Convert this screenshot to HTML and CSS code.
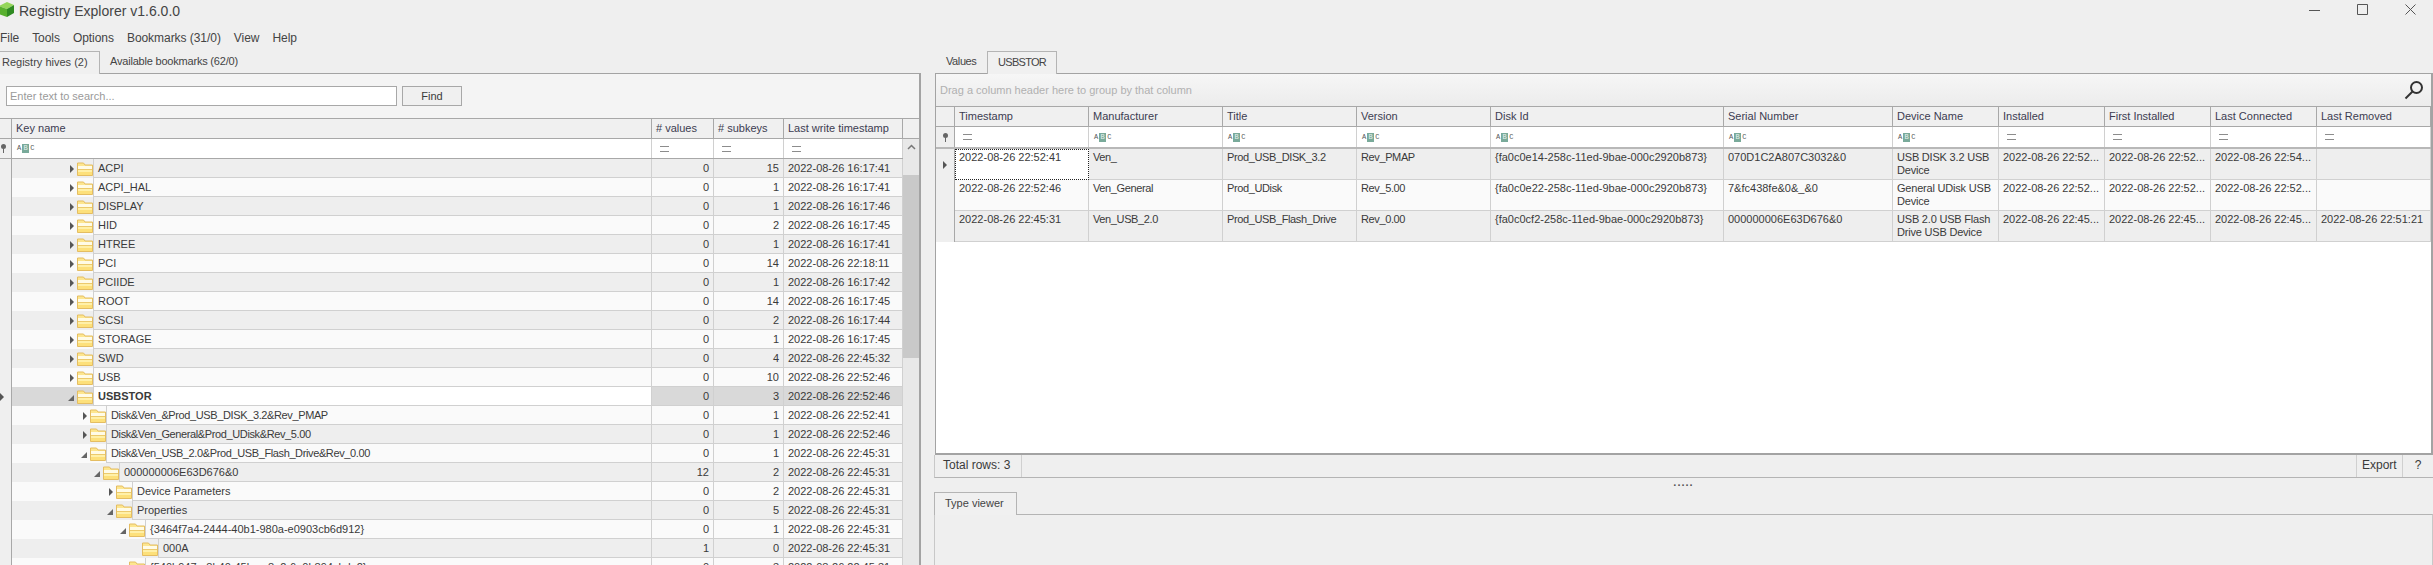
FILE: index.html
```html
<!DOCTYPE html>
<html lang="en">

<head>
    <meta charset="UTF-8">
    <title>Registry Explorer v1.6.0.0</title>
    <link rel="stylesheet" href="styles.css">
</head>

<body>
    <svg class="defs" aria-hidden="true">
        <symbol id="folder" viewBox="0 0 16 14">
            <path d="M.5 13.500V1h6l1.500 2h7.500v10.500z" fill="#fde68f" stroke="#e4bd62" />
            <rect x="1" y="4" width="14" height="3" fill="#fffbe6" />
            <rect x="1" y="7" width="14" height="1" fill="#ecca6c" />
            <rect x="1" y="8" width="14" height="2" fill="#fff0a8" />
            <rect x="1" y="10" width="14" height="3" fill="#fde07a" />
        </symbol>
        <symbol id="pin" viewBox="0 0 7 9">
            <circle cx="3.500" cy="2.500" r="2.500" fill="#666" />
            <rect x="3" y="4" width="1" height="5" fill="#666" />
        </symbol>
    </svg>

    <div class="app">
        <div class="titlebar">
            <svg class="logo" viewBox="0 0 15 15">
                <path d="M-1 4 7 0l7 3-7 4z" fill="#94d65a" />
                <path d="M-1 4l8 3v8l-8-3z" fill="#58b02e" />
                <path d="M7 7l7-4v8l-7 4z" fill="#2f8a22" />
            </svg>
            <span class="app-name">Registry Explorer v1.6.0.0</span>
            <div class="win-buttons">
                <svg viewBox="0 0 11 11"><path d="M0 6.500h11" /></svg>
                <svg viewBox="0 0 11 11"><path d="M.5.5h10v10H.5z" /></svg>
                <svg viewBox="0 0 11 11"><path d="M.5.5l10 10M10.500.5l-10 10" /></svg>
            </div>
        </div>

        <div class="menubar">
            <span>File</span>
            <span>Tools</span>
            <span>Options</span>
            <span>Bookmarks (31/0)</span>
            <span>View</span>
            <span>Help</span>
        </div>

        <div class="workspace">
            <div class="left">
                <div class="tabs">
                    <span class="tab active hives">Registry hives (2)</span>
                    <span class="tab bookmarks">Available bookmarks (62/0)</span>
                </div>
                <div class="hive-panel">
                    <div class="search">
                        <div class="search-input">Enter text to search...</div>
                        <div class="find">Find</div>
                    </div>

                    <div class="tree-row tree-head">
                        <div class="head-cell"></div>
                        <div class="head-cell">Key name</div>
                        <div class="head-cell"># values</div>
                        <div class="head-cell"># subkeys</div>
                        <div class="head-cell">Last write timestamp</div>
                        <div class="head-cell corner"></div>
                    </div>

                    <div class="tree-main">
                        <div class="tree-rows">
                            <div class="tree-row tree-filter">
                                <div class="ind"><svg class="pin"><use href="#pin" /></svg></div>
                                <div class="filter-cell"><span class="abc">A<b>B</b>C</span></div>
                                <div class="filter-cell"><i class="eq"></i></div>
                                <div class="filter-cell"><i class="eq"></i></div>
                                <div class="filter-cell"><i class="eq"></i></div>
                            </div>

                            <div class="tree-row even">
                                <div class="ind"></div>
                                <div class="key"><span class="indent"><i class="exp"></i><svg class="folder"><use href="#folder" /></svg></span><span class="name">ACPI</span></div>
                                <div class="num">0</div><div class="num">15</div><div class="stamp">2022-08-26 16:17:41</div>
                            </div>
                            <div class="tree-row odd">
                                <div class="ind"></div>
                                <div class="key"><span class="indent"><i class="exp"></i><svg class="folder"><use href="#folder" /></svg></span><span class="name">ACPI_HAL</span></div>
                                <div class="num">0</div><div class="num">1</div><div class="stamp">2022-08-26 16:17:41</div>
                            </div>
                            <div class="tree-row even">
                                <div class="ind"></div>
                                <div class="key"><span class="indent"><i class="exp"></i><svg class="folder"><use href="#folder" /></svg></span><span class="name">DISPLAY</span></div>
                                <div class="num">0</div><div class="num">1</div><div class="stamp">2022-08-26 16:17:46</div>
                            </div>
                            <div class="tree-row odd">
                                <div class="ind"></div>
                                <div class="key"><span class="indent"><i class="exp"></i><svg class="folder"><use href="#folder" /></svg></span><span class="name">HID</span></div>
                                <div class="num">0</div><div class="num">2</div><div class="stamp">2022-08-26 16:17:45</div>
                            </div>
                            <div class="tree-row even">
                                <div class="ind"></div>
                                <div class="key"><span class="indent"><i class="exp"></i><svg class="folder"><use href="#folder" /></svg></span><span class="name">HTREE</span></div>
                                <div class="num">0</div><div class="num">1</div><div class="stamp">2022-08-26 16:17:41</div>
                            </div>
                            <div class="tree-row odd">
                                <div class="ind"></div>
                                <div class="key"><span class="indent"><i class="exp"></i><svg class="folder"><use href="#folder" /></svg></span><span class="name">PCI</span></div>
                                <div class="num">0</div><div class="num">14</div><div class="stamp">2022-08-26 22:18:11</div>
                            </div>
                            <div class="tree-row even">
                                <div class="ind"></div>
                                <div class="key"><span class="indent"><i class="exp"></i><svg class="folder"><use href="#folder" /></svg></span><span class="name">PCIIDE</span></div>
                                <div class="num">0</div><div class="num">1</div><div class="stamp">2022-08-26 16:17:42</div>
                            </div>
                            <div class="tree-row odd">
                                <div class="ind"></div>
                                <div class="key"><span class="indent"><i class="exp"></i><svg class="folder"><use href="#folder" /></svg></span><span class="name">ROOT</span></div>
                                <div class="num">0</div><div class="num">14</div><div class="stamp">2022-08-26 16:17:45</div>
                            </div>
                            <div class="tree-row even">
                                <div class="ind"></div>
                                <div class="key"><span class="indent"><i class="exp"></i><svg class="folder"><use href="#folder" /></svg></span><span class="name">SCSI</span></div>
                                <div class="num">0</div><div class="num">2</div><div class="stamp">2022-08-26 16:17:44</div>
                            </div>
                            <div class="tree-row odd">
                                <div class="ind"></div>
                                <div class="key"><span class="indent"><i class="exp"></i><svg class="folder"><use href="#folder" /></svg></span><span class="name">STORAGE</span></div>
                                <div class="num">0</div><div class="num">1</div><div class="stamp">2022-08-26 16:17:45</div>
                            </div>
                            <div class="tree-row even">
                                <div class="ind"></div>
                                <div class="key"><span class="indent"><i class="exp"></i><svg class="folder"><use href="#folder" /></svg></span><span class="name">SWD</span></div>
                                <div class="num">0</div><div class="num">4</div><div class="stamp">2022-08-26 22:45:32</div>
                            </div>
                            <div class="tree-row odd">
                                <div class="ind"></div>
                                <div class="key"><span class="indent"><i class="exp"></i><svg class="folder"><use href="#folder" /></svg></span><span class="name">USB</span></div>
                                <div class="num">0</div><div class="num">10</div><div class="stamp">2022-08-26 22:52:46</div>
                            </div>
                            <div class="tree-row selected">
                                <div class="ind"><i class="exp"></i></div>
                                <div class="key"><span class="indent"><i class="exp open"></i><svg class="folder"><use href="#folder" /></svg></span><span class="name">USBSTOR</span></div>
                                <div class="num">0</div><div class="num">3</div><div class="stamp">2022-08-26 22:52:46</div>
                            </div>
                            <div class="tree-row odd">
                                <div class="ind"></div>
                                <div class="key"><span class="indent lv1"><i class="exp"></i><svg class="folder"><use href="#folder" /></svg></span><span class="name tight">Disk&amp;Ven_&amp;Prod_USB_DISK_3.2&amp;Rev_PMAP</span></div>
                                <div class="num">0</div><div class="num">1</div><div class="stamp">2022-08-26 22:52:41</div>
                            </div>
                            <div class="tree-row even">
                                <div class="ind"></div>
                                <div class="key"><span class="indent lv1"><i class="exp"></i><svg class="folder"><use href="#folder" /></svg></span><span class="name tight">Disk&amp;Ven_General&amp;Prod_UDisk&amp;Rev_5.00</span></div>
                                <div class="num">0</div><div class="num">1</div><div class="stamp">2022-08-26 22:52:46</div>
                            </div>
                            <div class="tree-row odd">
                                <div class="ind"></div>
                                <div class="key"><span class="indent lv1"><i class="exp open"></i><svg class="folder"><use href="#folder" /></svg></span><span class="name tight">Disk&amp;Ven_USB_2.0&amp;Prod_USB_Flash_Drive&amp;Rev_0.00</span></div>
                                <div class="num">0</div><div class="num">1</div><div class="stamp">2022-08-26 22:45:31</div>
                            </div>
                            <div class="tree-row even">
                                <div class="ind"></div>
                                <div class="key"><span class="indent lv2"><i class="exp open"></i><svg class="folder"><use href="#folder" /></svg></span><span class="name">000000006E63D676&amp;0</span></div>
                                <div class="num">12</div><div class="num">2</div><div class="stamp">2022-08-26 22:45:31</div>
                            </div>
                            <div class="tree-row odd">
                                <div class="ind"></div>
                                <div class="key"><span class="indent lv3"><i class="exp"></i><svg class="folder"><use href="#folder" /></svg></span><span class="name">Device Parameters</span></div>
                                <div class="num">0</div><div class="num">2</div><div class="stamp">2022-08-26 22:45:31</div>
                            </div>
                            <div class="tree-row even">
                                <div class="ind"></div>
                                <div class="key"><span class="indent lv3"><i class="exp open"></i><svg class="folder"><use href="#folder" /></svg></span><span class="name">Properties</span></div>
                                <div class="num">0</div><div class="num">5</div><div class="stamp">2022-08-26 22:45:31</div>
                            </div>
                            <div class="tree-row odd">
                                <div class="ind"></div>
                                <div class="key"><span class="indent lv4"><i class="exp open"></i><svg class="folder"><use href="#folder" /></svg></span><span class="name">{3464f7a4-2444-40b1-980a-e0903cb6d912}</span></div>
                                <div class="num">0</div><div class="num">1</div><div class="stamp">2022-08-26 22:45:31</div>
                            </div>
                            <div class="tree-row even">
                                <div class="ind"></div>
                                <div class="key"><span class="indent lv5"><svg class="folder"><use href="#folder" /></svg></span><span class="name">000A</span></div>
                                <div class="num">1</div><div class="num">0</div><div class="stamp">2022-08-26 22:45:31</div>
                            </div>
                            <div class="tree-row odd">
                                <div class="ind"></div>
                                <div class="key"><span class="indent lv4"><i class="exp open"></i><svg class="folder"><use href="#folder" /></svg></span><span class="name">{540b947e-8b40-45bc-a8a2-6a0b894cbda2}</span></div>
                                <div class="num">0</div><div class="num">3</div><div class="stamp">2022-08-26 22:45:31</div>
                            </div>
                        </div>

                        <div class="scrollbar">
                            <svg class="chevron" viewBox="0 0 9 6"><path d="M1 5l3.500-3.500L8 5" /></svg>
                            <div class="thumb"></div>
                        </div>
                    </div>
                </div>
            </div>

            <div class="right">
                <div class="tabs right-tabs">
                    <span class="tab values">Values</span>
                    <span class="tab active usbstor">USBSTOR</span>
                </div>

                <div class="grid-panel">
                    <div class="group-bar">
                        <span>Drag a column header here to group by that column</span>
                        <svg class="magnifier" viewBox="0 0 20 20"><circle cx="12.500" cy="7.500" r="5.500" /><path d="M8.500 11.500L1.500 18.500" /></svg>
                    </div>

                    <div class="usb-row usb-head">
                        <div class="head-cell"></div>
                        <div class="head-cell">Timestamp</div>
                        <div class="head-cell">Manufacturer</div>
                        <div class="head-cell">Title</div>
                        <div class="head-cell">Version</div>
                        <div class="head-cell">Disk Id</div>
                        <div class="head-cell">Serial Number</div>
                        <div class="head-cell">Device Name</div>
                        <div class="head-cell">Installed</div>
                        <div class="head-cell">First Installed</div>
                        <div class="head-cell">Last Connected</div>
                        <div class="head-cell">Last Removed</div>
                    </div>

                    <div class="usb-row usb-filter">
                        <div class="ind"><svg class="pin"><use href="#pin" /></svg></div>
                        <div class="filter-cell"><i class="eq"></i></div>
                        <div class="filter-cell"><span class="abc">A<b>B</b>C</span></div>
                        <div class="filter-cell"><span class="abc">A<b>B</b>C</span></div>
                        <div class="filter-cell"><span class="abc">A<b>B</b>C</span></div>
                        <div class="filter-cell"><span class="abc">A<b>B</b>C</span></div>
                        <div class="filter-cell"><span class="abc">A<b>B</b>C</span></div>
                        <div class="filter-cell"><span class="abc">A<b>B</b>C</span></div>
                        <div class="filter-cell"><i class="eq"></i></div>
                        <div class="filter-cell"><i class="eq"></i></div>
                        <div class="filter-cell"><i class="eq"></i></div>
                        <div class="filter-cell"><i class="eq"></i></div>
                    </div>

                    <div class="usb-row even">
                        <div class="ind"><i class="exp"></i></div>
                        <div class="usb-cell focused">2022-08-26 22:52:41</div>
                        <div class="usb-cell tight">Ven_</div>
                        <div class="usb-cell tight">Prod_USB_DISK_3.2</div>
                        <div class="usb-cell tight">Rev_PMAP</div>
                        <div class="usb-cell">{fa0c0e14-258c-11ed-9bae-000c2920b873}</div>
                        <div class="usb-cell">070D1C2A807C3032&amp;0</div>
                        <div class="usb-cell snug">USB DISK 3.2 USB Device</div>
                        <div class="usb-cell">2022-08-26 22:52...</div>
                        <div class="usb-cell">2022-08-26 22:52...</div>
                        <div class="usb-cell">2022-08-26 22:54...</div>
                        <div class="usb-cell"></div>
                    </div>
                    <div class="usb-row odd">
                        <div class="ind"></div>
                        <div class="usb-cell">2022-08-26 22:52:46</div>
                        <div class="usb-cell tight">Ven_General</div>
                        <div class="usb-cell tight">Prod_UDisk</div>
                        <div class="usb-cell tight">Rev_5.00</div>
                        <div class="usb-cell">{fa0c0e22-258c-11ed-9bae-000c2920b873}</div>
                        <div class="usb-cell">7&amp;fc438fe&amp;0&amp;_&amp;0</div>
                        <div class="usb-cell snug">General UDisk USB Device</div>
                        <div class="usb-cell">2022-08-26 22:52...</div>
                        <div class="usb-cell">2022-08-26 22:52...</div>
                        <div class="usb-cell">2022-08-26 22:52...</div>
                        <div class="usb-cell"></div>
                    </div>
                    <div class="usb-row even">
                        <div class="ind"></div>
                        <div class="usb-cell">2022-08-26 22:45:31</div>
                        <div class="usb-cell tight">Ven_USB_2.0</div>
                        <div class="usb-cell tight">Prod_USB_Flash_Drive</div>
                        <div class="usb-cell tight">Rev_0.00</div>
                        <div class="usb-cell">{fa0c0cf2-258c-11ed-9bae-000c2920b873}</div>
                        <div class="usb-cell">000000006E63D676&amp;0</div>
                        <div class="usb-cell snug">USB 2.0 USB Flash Drive USB Device</div>
                        <div class="usb-cell">2022-08-26 22:45...</div>
                        <div class="usb-cell">2022-08-26 22:45...</div>
                        <div class="usb-cell">2022-08-26 22:45...</div>
                        <div class="usb-cell">2022-08-26 22:51:21</div>
                    </div>
                </div>

                <div class="status">
                    <span class="total">Total rows: 3</span>
                    <span class="export">Export</span>
                    <span class="help">?</span>
                </div>

                <div class="splitter"><span>.....</span></div>

                <div class="tabs viewer-tabs">
                    <span class="tab active viewer">Type viewer</span>
                </div>
                <div class="viewer-panel"></div>
            </div>
        </div>
    </div>
</body>

</html>
```

FILE: styles.css
```css
html,
body {
    margin: 0;
    height: 100%;
    overflow: hidden;
}

body {
    background-color: #efefef;
    color: #3a3a3a;
    font-family: "Liberation Sans", Arial, sans-serif;
    font-size: 11px;
}

.defs {
    position: absolute;
    width: 0;
    height: 0;
}

.app {
    display: flex;
    flex-direction: column;
    height: 565px;
    overflow: hidden;
}

/* title + menu */
.titlebar {
    display: flex;
    align-items: center;
    height: 24px;
    flex: none;
}

.logo {
    width: 15px;
    height: 15px;
    margin-top: -5px;
}

.app-name {
    margin-left: 4px;
    margin-top: -3px;
    font-size: 14px;
    color: #444;
}

.win-buttons {
    display: flex;
    gap: 37px;
    margin-left: auto;
    margin-right: 17px;
    margin-top: -6px;
}

.win-buttons svg {
    width: 11px;
    height: 11px;
    fill: none;
    stroke: #555;
}

.menubar {
    display: flex;
    gap: 13px;
    height: 27px;
    flex: none;
    align-items: center;
    font-size: 12px;
    letter-spacing: -0.05px;
    color: #444;
}

.workspace {
    display: flex;
    flex: 1;
    min-height: 0;
}

/* tabs */
.tabs {
    display: flex;
    height: 22px;
    flex: none;
    color: #444;
}

.tab {
    line-height: 21px;
    box-sizing: border-box;
    height: 23px;
    white-space: nowrap;
}

.tab.active {
    border: 1px solid #b4b4b4;
    border-bottom: 0;
    background-color: #f0f0f0;
    position: relative;
    z-index: 1;
}

.hives {
    width: 100px;
    padding-left: 2px;
    border-left: 0 !important;
}

.bookmarks {
    margin-left: 10px;
    letter-spacing: -0.2px;
}

.right-tabs {
    padding-left: 12px;
}

.values {
    width: 41px;
    letter-spacing: -0.4px;
}

.usbstor {
    width: 70px;
    padding-left: 10px;
    letter-spacing: -0.7px;
}

/* left side */
.left {
    width: 921px;
    flex: none;
    display: flex;
    flex-direction: column;
}

.hive-panel {
    flex: 1;
    min-height: 0;
    display: flex;
    flex-direction: column;
    border-top: 1px solid #a3a3a3;
    border-right: 2px solid #a3a3a3;
    background-color: #f4f4f4;
    overflow: hidden;
}

.search {
    display: flex;
    gap: 5px;
    height: 32px;
    padding: 12px 0 0 6px;
    flex: none;
}

.search-input {
    width: 391px;
    height: 20px;
    box-sizing: border-box;
    padding-left: 3px;
    line-height: 18px;
    border: 1px solid #a8a8a8;
    background-color: white;
    color: #9a9a9a;
}

.find {
    width: 60px;
    height: 20px;
    box-sizing: border-box;
    line-height: 18px;
    text-align: center;
    border: 1px solid #a8a8a8;
    background-color: #f0f0f0;
}

.tree-row {
    display: grid;
    grid-template-columns: 12px 640px 62px 70px 119px;
    height: 19px;
}

.tree-head {
    grid-template-columns: 12px 640px 62px 70px 119px 17px;
    height: 21px;
    flex: none;
    border-top: 1px solid #a8a8a8;
    border-bottom: 1px solid #a8a8a8;
    box-sizing: border-box;
}

.head-cell {
    box-sizing: border-box;
    padding-left: 4px;
    line-height: 18px;
    background-color: #f0f0f0;
    border-right: 1px solid #a8a8a8;
    color: #3c3c50;
    white-space: nowrap;
    overflow: hidden;
}

.head-cell.corner {
    border-right: 0;
}

.tree-main {
    display: flex;
    flex: 1;
    min-height: 0;
}

.tree-rows {
    width: 903px;
    flex: none;
}

.tree-filter {
    height: 20px;
    background-color: white;
    border-bottom: 1px solid #a8a8a8;
    box-sizing: border-box;
}

.ind {
    display: flex;
    align-items: center;
    justify-content: center;
    box-sizing: border-box;
    border-right: 1px solid #a8a8a8;
    background-color: #efefef;
}

.tree-row .ind {
    justify-content: flex-start;
    padding-left: 0;
}

.pin {
    width: 7px;
    height: 9px;
}

.filter-cell {
    display: flex;
    align-items: center;
    box-sizing: border-box;
    padding-left: 5px;
    background-color: white;
    border-right: 1px solid #d0d0d0;
}

.eq {
    display: block;
    width: 9px;
    height: 4px;
    margin-left: 3px;
    border-top: 1px solid #8c8c8c;
    border-bottom: 1px solid #8c8c8c;
}

.abc {
    display: flex;
    align-items: center;
    font-family: "Liberation Mono", monospace;
    font-size: 7px;
    line-height: 9px;
    color: #555;
}

.abc b {
    margin: 0 1px;
    width: 7px;
    height: 9px;
    text-align: center;
    font-weight: normal;
    background-color: #79aa9a;
    color: #e8f2ee;
}

.even {
    background-color: #eeeeee;
}

.odd {
    background-color: #fafafa;
}

.selected {
    background-color: #d9d9d9;
}

.key {
    display: flex;
    min-width: 0;
    box-sizing: border-box;
    border-right: 1px solid #d0d0d0;
}

.indent {
    display: flex;
    align-items: center;
    justify-content: flex-end;
    gap: 3px;
    width: 81px;
    flex: none;
}

.lv1 {
    width: 94px;
}

.lv2 {
    width: 107px;
}

.lv3 {
    width: 120px;
}

.lv4 {
    width: 133px;
}

.lv5 {
    width: 146px;
}

.folder {
    width: 16px;
    height: 14px;
}

.exp {
    display: block;
    width: 0;
    height: 0;
    border-left: 4px solid #555;
    border-top: 4px solid transparent;
    border-bottom: 4px solid transparent;
}

.exp.open {
    margin-top: 3px;
    margin-left: -2px;
    border-left: 6px solid transparent;
    border-top: 0;
    border-bottom: 6px solid #666;
}

.name {
    flex: 1;
    box-sizing: border-box;
    padding-left: 4px;
    line-height: 18px;
    border-left: 1px solid #d0d0d0;
    border-bottom: 1px solid #d0d0d0;
    white-space: nowrap;
}

.tight {
    letter-spacing: -0.38px;
}

.snug {
    letter-spacing: -0.2px;
}

.selected .name {
    background-color: white;
    font-weight: bold;
}

.num,
.stamp {
    box-sizing: border-box;
    line-height: 18px;
    border-right: 1px solid #d0d0d0;
    border-bottom: 1px solid #d0d0d0;
}

.num {
    padding-right: 4px;
    text-align: right;
}

.stamp {
    padding-left: 4px;
}

.scrollbar {
    display: flex;
    flex-direction: column;
    width: 17px;
    padding-top: 36px;
    box-sizing: border-box;
    background-color: #e8e8e8;
    position: relative;
}

.chevron {
    position: absolute;
    top: 5px;
    left: 4px;
    width: 9px;
    height: 6px;
    fill: none;
    stroke: #777;
    stroke-width: 1.5;
}

.thumb {
    height: 183px;
    background-color: #c9c9c9;
}

/* right side */
.right {
    flex: 1;
    min-width: 0;
    margin-left: 13px;
    display: flex;
    flex-direction: column;
}

.grid-panel {
    display: flex;
    flex-direction: column;
    height: 382px;
    flex: none;
    margin-left: 1px;
    box-sizing: border-box;
    border: 1px solid #a3a3a3;
    border-bottom: 2px solid #a3a3a3;
    border-right: 2px solid #a3a3a3;
    background-color: white;
}

.group-bar {
    display: flex;
    align-items: center;
    justify-content: space-between;
    height: 32px;
    flex: none;
    padding: 0 7px 0 4px;
    background: linear-gradient(#f6f6f6, #ececec);
    color: #b0b0b0;
}

.magnifier {
    width: 20px;
    height: 20px;
    fill: none;
    stroke: #333;
    stroke-width: 2;
}

.usb-row {
    display: grid;
    grid-template-columns: 19px 134px 134px 134px 134px 233px 169px 106px 106px 106px 106px 1fr;
    height: 31px;
}

.usb-head {
    height: 21px;
    border-top: 1px solid #a8a8a8;
    border-bottom: 1px solid #a8a8a8;
    box-sizing: border-box;
}

.usb-filter {
    height: 22px;
    border-bottom: 2px solid #b8b8b8;
    box-sizing: border-box;
}

.usb-cell {
    box-sizing: border-box;
    padding: 2px 4px 0 4px;
    line-height: 13px;
    border-right: 1px solid #d0d0d0;
    border-bottom: 1px solid #d0d0d0;
    overflow: hidden;
}

.usb-cell.focused {
    padding: 1px 3px 0 3px;
    background-color: white;
    border: 1px dotted #222;
}

.status {
    display: flex;
    height: 23px;
    flex: none;
    box-sizing: border-box;
    border-left: 1px solid #c8c8c8;
    border-bottom: 1px solid #b4b4b4;
    line-height: 21px;
    font-size: 12px;
    white-space: nowrap;
}

.total {
    width: 87px;
    padding-left: 8px;
    box-sizing: border-box;
    border-right: 1px solid #d0d0d0;
}

.export {
    margin-left: auto;
    width: 47px;
    padding-left: 5px;
    box-sizing: border-box;
    border-left: 1px solid #d0d0d0;
    border-right: 1px solid #d0d0d0;
}

.help {
    width: 30px;
    text-align: center;
}

.splitter {
    height: 14px;
    flex: none;
    text-align: center;
    line-height: 8px;
    letter-spacing: 1px;
    font-weight: bold;
    color: #555;
}

.viewer-tabs {
    height: 22px;
}

.viewer {
    width: 83px;
    padding-left: 10px;
}

.viewer-panel {
    flex: 1;
    border-top: 1px solid #b4b4b4;
    border-left: 1px solid #c8c8c8;
    border-right: 1px solid #c8c8c8;
}
```
